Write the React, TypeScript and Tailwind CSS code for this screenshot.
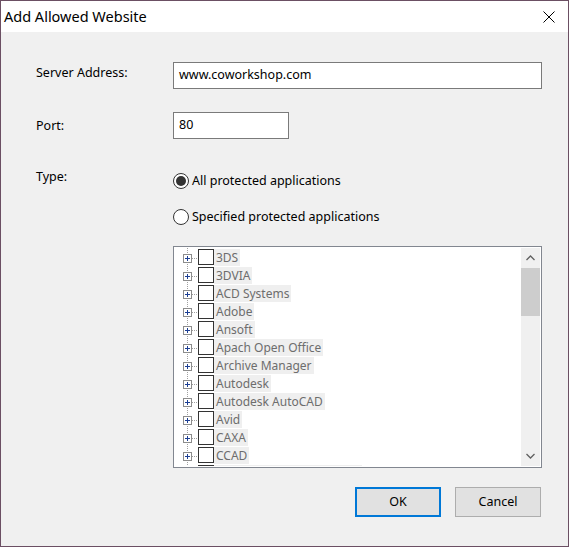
import React from 'react'

const apps = [
  '3DS',
  '3DVIA',
  'ACD Systems',
  'Adobe',
  'Ansoft',
  'Apach Open Office',
  'Archive Manager',
  'Autodesk',
  'Autodesk AutoCAD',
  'Avid',
  'CAXA',
  'CCAD',
  'Cimatron Software Group',
]

function TreeLines() {
  return (
    <svg width="23" height="18" viewBox="0 0 23 18" className="shrink-0">
      <line x1="12.5" y1="0" x2="12.5" y2="18" stroke="#a0a0a0" strokeDasharray="1 1" />
      <line x1="17" y1="10.5" x2="23" y2="10.5" stroke="#a0a0a0" strokeDasharray="1 1" />
      <rect x="8.5" y="6.5" width="8" height="8" fill="#ffffff" stroke="#8c8c8c" />
      <line x1="10" y1="10.5" x2="15" y2="10.5" stroke="#1c3f94" />
      <line x1="12.5" y1="8" x2="12.5" y2="13" stroke="#1c3f94" />
    </svg>
  )
}

function TreeRow({ label }: { label: string }) {
  return (
    <div className="flex items-center h-[18px]">
      <TreeLines />
      <div className="w-[16px] h-[16px] border border-[#333333] bg-white shrink-0" />
      <span className="px-[2px] bg-[#efefef] text-[#6d6d6d] text-[12px] leading-[17px] whitespace-nowrap">
        {label}
      </span>
    </div>
  )
}

function Radio({ checked, label }: { checked?: boolean; label: string }) {
  return (
    <div className="flex items-center h-[18px]">
      <div className="w-[16px] h-[16px] rounded-full border border-[#333333] bg-white flex items-center justify-center shrink-0">
        {checked && <div className="w-[10px] h-[10px] rounded-full bg-[#333333]" />}
      </div>
      <span className="ml-[3px] text-[12.5px] text-black">{label}</span>
    </div>
  )
}

export default function App() {
  return (
    <div
      className="w-[569px] h-[547px] border border-[#6b4f63] bg-[#f0f0f0] flex flex-col overflow-hidden"
      style={{ fontFamily: '"Noto Sans", "Liberation Sans", sans-serif' }}
    >
      {/* title bar */}
      <div className="h-[31px] bg-white flex items-center justify-between pl-[3px] pr-[13px] shrink-0">
        <span className="text-[14.5px] text-black">Add Allowed Website</span>
        <svg width="12" height="12" viewBox="0 0 12 12">
          <path d="M0.5 0.5 L11.5 11.5 M11.5 0.5 L0.5 11.5" stroke="#000" strokeWidth="1" />
        </svg>
      </div>

      <div className="flex flex-col pl-[35px] pr-[26px]">
        <div className="flex items-start mt-[30px]">
          <div className="w-[137px] pt-[2px] text-[12.5px] text-black">Server Address:</div>
          <div className="flex-1 h-[27px] border border-[#7a7a7a] bg-white flex items-center px-[5px] text-[12.5px] text-black">
            www.coworkshop.com
          </div>
        </div>

        <div className="flex items-start mt-[23px]">
          <div className="w-[137px] pt-[5px] text-[12.5px] text-black">Port:</div>
          <div className="w-[116px] h-[27px] border border-[#7a7a7a] bg-white flex items-center px-[5px] text-[12.5px] text-black">
            80
          </div>
        </div>

        <div className="flex items-start mt-[33px]">
          <div className="w-[137px] -mt-[3px] text-[12.5px] text-black leading-[16px]">Type:</div>
          <div className="flex-1 flex flex-col">
            <Radio checked label="All protected applications" />
            <div className="mt-[18px]">
              <Radio label="Specified protected applications" />
            </div>

            {/* application tree */}
            <div className="mt-[20px] h-[222px] border border-[#828790] bg-white flex p-[1px] overflow-hidden">
              <div className="flex-1 flex flex-col overflow-hidden">
                {apps.map((a) => (
                  <TreeRow key={a} label={a} />
                ))}
              </div>
              <div className="w-[19px] bg-[#f0f0f0] flex flex-col items-center shrink-0">
                <div className="h-[20px] w-full flex items-center justify-center">
                  <svg width="9" height="6" viewBox="0 0 9 6">
                    <path d="M0.5 5 L4.5 1 L8.5 5" stroke="#606060" strokeWidth="1.3" fill="none" />
                  </svg>
                </div>
                <div className="w-full h-[48px] bg-[#cdcdcd]" />
                <div className="flex-1" />
                <div className="h-[20px] w-full flex items-center justify-center">
                  <svg width="9" height="6" viewBox="0 0 9 6">
                    <path d="M0.5 1 L4.5 5 L8.5 1" stroke="#606060" strokeWidth="1.3" fill="none" />
                  </svg>
                </div>
              </div>
            </div>
          </div>
        </div>

        <div className="flex justify-end gap-[14px] mt-[19px] pr-[1px]">
          <button className="w-[86px] h-[30px] bg-[#e1e1e1] border-2 border-[#0078d7] text-[12.5px] text-black">
            OK
          </button>
          <button className="w-[86px] h-[30px] bg-[#e1e1e1] border border-[#adadad] text-[12.5px] text-black">
            Cancel
          </button>
        </div>
      </div>
    </div>
  )
}
